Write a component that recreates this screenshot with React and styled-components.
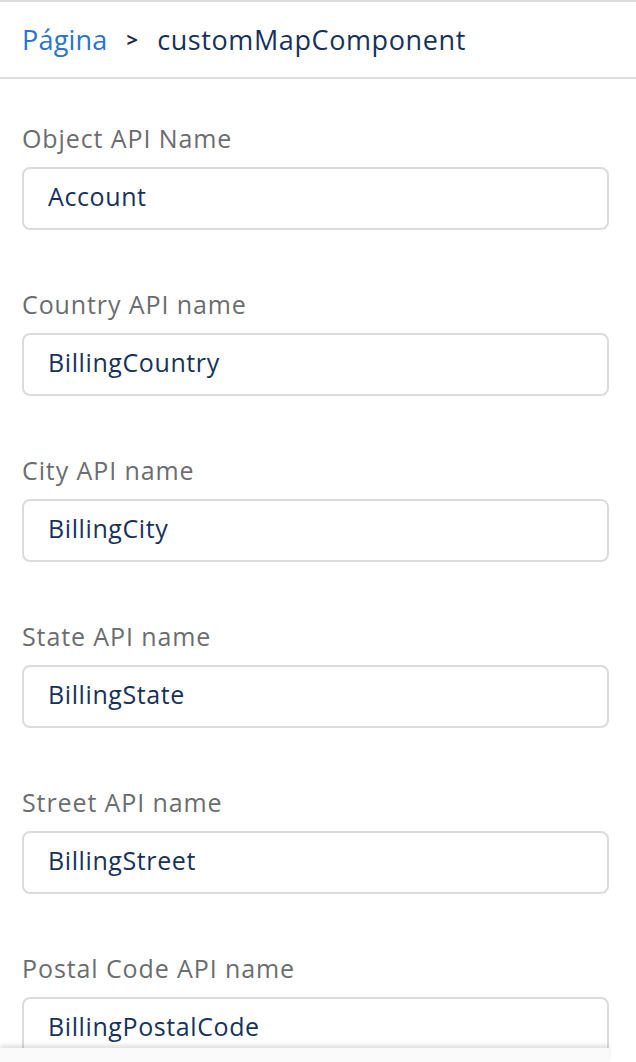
import React from "react";
import styled, { createGlobalStyle } from "styled-components";

const GlobalStyle = createGlobalStyle`
  html, body {
    margin: 0;
    padding: 0;
    background: #fff;
    font-family: "Open Sans", "Lato", sans-serif;
  }
`;

const Page = styled.div`
  position: relative;
  width: 636px;
  height: 1062px;
  overflow: hidden;
  background: #fff;
  border-top: 2px solid #dcdcdc;
  box-sizing: border-box;
`;

const Header = styled.div`
  display: flex;
  align-items: center;
  gap: 19px;
  height: 75px;
  padding: 0 22px;
  border-bottom: 2px solid #dcdcdc;
  font-size: 27px;
  letter-spacing: 0.2px;
`;

const Crumb = styled.span`
  color: #2a73d0;
`;

const Chevron = styled.span`
  color: #1a2b48;
  font-weight: 700;
  font-size: 20px;
`;

const Current = styled.span`
  color: #16325c;
  letter-spacing: 0.6px;
`;

const Form = styled.div`
  display: flex;
  flex-direction: column;
  gap: 59px;
  padding: 44px 27px 0 22px;
`;

const Field = styled.div`
  display: flex;
  flex-direction: column;
  gap: 12px;
`;

const Label = styled.label`
  color: #6b6d70;
  font-size: 25px;
  letter-spacing: 0.9px;
  line-height: 30px;
  padding-bottom: 2px;
`;

const Input = styled.div`
  height: 63px;
  box-sizing: border-box;
  border: 2px solid #dddbda;
  border-radius: 8px;
  padding: 0 24px 5px;
  display: flex;
  align-items: center;
  color: #16325c;
  font-size: 25px;
  letter-spacing: 0.6px;
`;

const Footer = styled.div`
  position: absolute;
  left: 0;
  right: 27px;
  bottom: 0;
  height: 14px;
  background: #fafafa;
  box-shadow: 0 -3px 4px rgba(0, 0, 0, 0.12);
`;

const fields = [
  ["Object API Name", "Account"],
  ["Country API name", "BillingCountry"],
  ["City API name", "BillingCity"],
  ["State API name", "BillingState"],
  ["Street API name", "BillingStreet"],
  ["Postal Code API name", "BillingPostalCode"],
];

const App = () => {
  return (
    <Page>
      <GlobalStyle />
      <Header>
        <Crumb>Página</Crumb>
        <Chevron>&gt;</Chevron>
        <Current>customMapComponent</Current>
      </Header>
      <Form>
        {fields.map(([label, value]) => (
          <Field key={label}>
            <Label>{label}</Label>
            <Input>{value}</Input>
          </Field>
        ))}
      </Form>
      <Footer />
    </Page>
  );
};

export default App;
